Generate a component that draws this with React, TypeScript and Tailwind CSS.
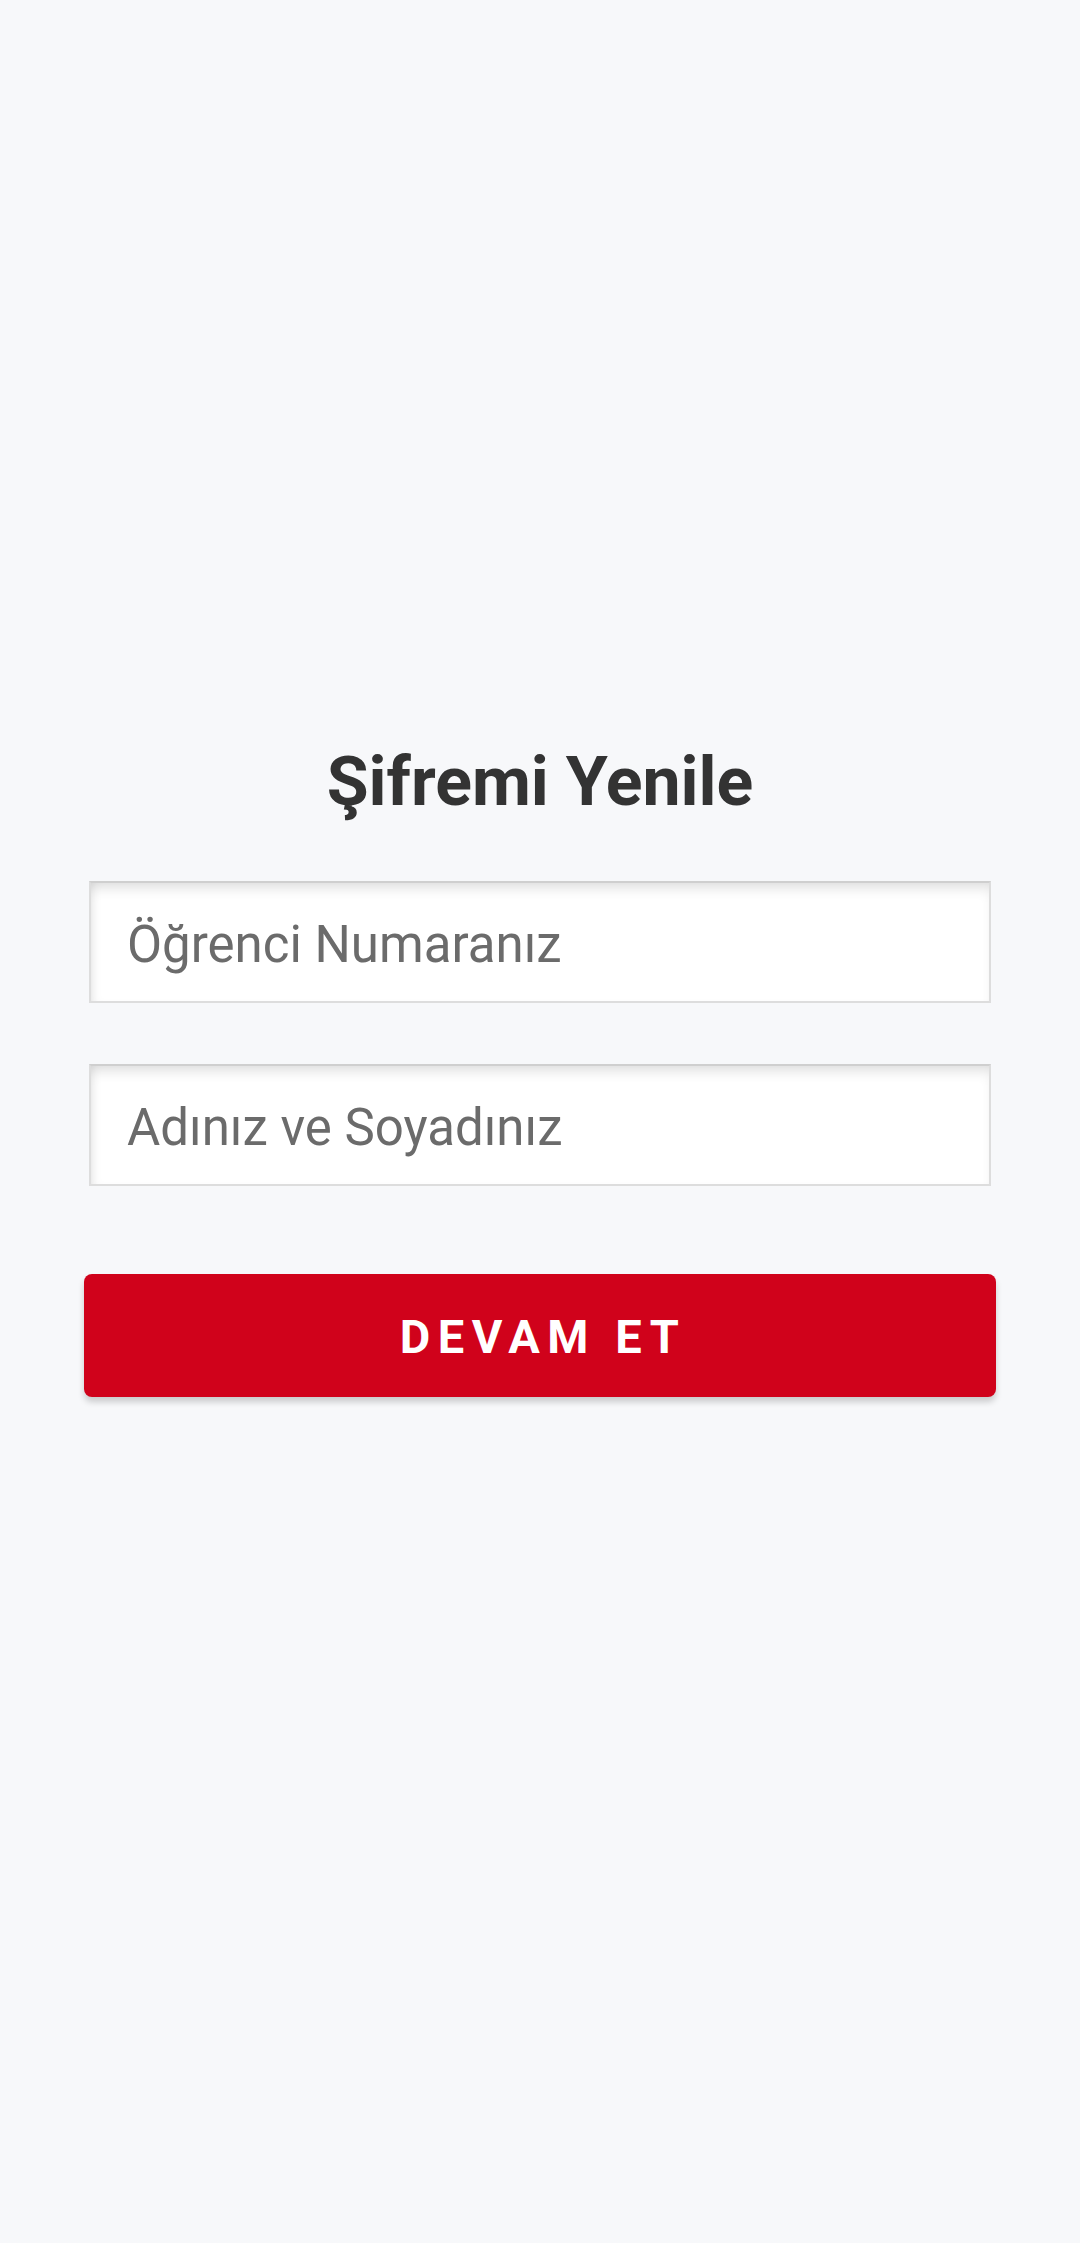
import { useState } from 'react';

const Field = ({ placeholder }: { placeholder: string }) => {
  const [value, setValue] = useState('');
  return (
    <input
      value={value}
      onChange={(e) => setValue(e.target.value)}
      placeholder={placeholder}
      className="w-full h-[122px] px-[36px] pt-[4px] bg-white border-2 border-[#dddddd] border-t-[#cfcfcf] shadow-[inset_0_10px_14px_-6px_rgba(0,0,0,0.14),inset_8px_0_12px_-8px_rgba(0,0,0,0.1)] text-[51px] text-[#555] placeholder:text-[#6b6b6b] outline-none"
    />
  );
};

const App = () => {
  return (
    <div className="min-h-screen bg-[#f7f8fa] font-['Roboto',sans-serif]">
      <div className="pt-[748px] flex flex-col items-center">
        <h1 className="text-[68px] leading-none font-bold text-[#333333]">Şifremi Yenile</h1>

        <div className="mt-[65px] w-[902px] flex flex-col gap-[61px]">
          <Field placeholder="Öğrenci Numaranız" />
          <Field placeholder="Adınız ve Soyadınız" />
        </div>

        <button className="mt-[88px] w-[912px] h-[123px] pt-[4px] pl-[6px] rounded-[8px] bg-[#d0021b] text-white text-[47px] font-bold tracking-[0.16em] shadow-[0_5px_6px_rgba(0,0,0,0.18)]">
          DEVAM ET
        </button>
      </div>
    </div>
  );
};

export default App;
